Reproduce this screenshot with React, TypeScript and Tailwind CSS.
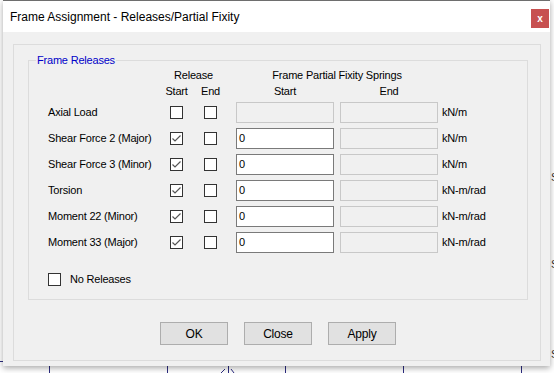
const rows = [
  { label: "Axial Load", start: false, value: null as string | null, unit: "kN/m" },
  { label: "Shear Force 2 (Major)", start: true, value: "0", unit: "kN/m" },
  { label: "Shear Force 3 (Minor)", start: true, value: "0", unit: "kN/m" },
  { label: "Torsion", start: true, value: "0", unit: "kN-m/rad" },
  { label: "Moment 22 (Minor)", start: true, value: "0", unit: "kN-m/rad" },
  { label: "Moment 33 (Major)", start: true, value: "0", unit: "kN-m/rad" },
];

function CheckBox({ checked }: { checked?: boolean }) {
  return (
    <div className="w-[13px] h-[13px] border border-[#333333] bg-white flex items-center justify-center">
      {checked && (
        <svg width="11" height="11" viewBox="0 0 11 11">
          <path d="M1.5 5.5 L4 8 L9.5 2.5" fill="none" stroke="#555555" strokeWidth="1.2" />
        </svg>
      )}
    </div>
  );
}

function TextBox({ value }: { value: string | null }) {
  if (value === null) {
    return <div className="w-[98px] h-[21px] border border-[#c8c8c8] bg-[#f0f0f0]" />;
  }
  return (
    <div className="w-[98px] h-[21px] border border-[#7a7a7a] bg-white pl-[2px] leading-[19px]">
      {value}
    </div>
  );
}

function Btn({ label }: { label: string }) {
  return (
    <div className="w-[68px] h-[23px] border border-[#adadad] bg-[#e1e1e1] flex items-center justify-center text-[12px]">
      {label}
    </div>
  );
}

export default function App() {
  return (
    <div
      className="w-[554px] h-[373px] bg-white relative overflow-hidden text-[11px] tracking-[-0.2px] text-black"
      style={{ fontFamily: '"Liberation Sans", Arial, sans-serif' }}
    >
      {/* canvas behind the dialog */}
      <svg className="absolute inset-0" width="554" height="373">
        <g stroke="#2c2c80" strokeWidth="1">
          <line x1="0" y1="361.5" x2="6" y2="361.5" />
          <line x1="49.5" y1="366" x2="49.5" y2="373" />
          <line x1="167.5" y1="366" x2="167.5" y2="373" />
          <line x1="285.5" y1="366" x2="285.5" y2="373" />
          <line x1="403.5" y1="366" x2="403.5" y2="373" />
          <line x1="521.5" y1="366" x2="521.5" y2="373" />
          <line x1="225" y1="369" x2="221" y2="373" />
          <line x1="228.5" y1="366" x2="228.5" y2="373" />
          <line x1="231" y1="369" x2="234" y2="373" />
        </g>
        <text x="551" y="181" fontSize="11" fill="#333" fontFamily="Liberation Sans">S</text>
        <text x="551" y="268" fontSize="11" fill="#333" fontFamily="Liberation Sans">S</text>
        <text x="551" y="358" fontSize="11" fill="#333" fontFamily="Liberation Sans">S</text>
      </svg>

      {/* dialog window */}
      <div className="absolute left-[3px] top-0 w-[547px] h-[366px] bg-[#f0f0f0] border-t border-[#6e6e6e] shadow-[0_2px_6px_rgba(0,0,0,0.35)] flex flex-col">
        <div className="h-[31px] bg-white flex items-center justify-between pl-[7px] pr-[1px]">
          <span className="text-[12px] tracking-normal">Frame Assignment - Releases/Partial Fixity</span>
          <div className="w-[18px] h-[19px] bg-[#c75050] text-white text-[10px] font-bold flex items-center justify-center mt-[4px]">
            x
          </div>
        </div>

        <div className="ml-[10px] mt-[12px] w-[528px] h-[317px] border border-[#dcdcdc] pt-[15px] pl-[14px] flex flex-col">
          {/* group box */}
          <div className="relative w-[500px] h-[240px] border border-[#dcdcdc] pt-[7px] pl-[19px]">
            <span className="absolute left-[7px] top-[-8px] px-[1px] bg-[#f0f0f0] text-[#0000c8] leading-[14px]">
              Frame Releases
            </span>

            <div className="flex h-[15px] leading-[15px]">
              <div className="w-[122px]" />
              <div className="w-[47px] flex justify-center">Release</div>
              <div className="w-[19px]" />
              <div className="w-[202px] flex justify-center">Frame Partial Fixity Springs</div>
            </div>
            <div className="flex h-[16px] leading-[16px]">
              <div className="w-[122px]" />
              <div className="w-[34px]">
                <div className="w-[13px] flex justify-center">Start</div>
              </div>
              <div className="w-[32px]">
                <div className="w-[13px] flex justify-center">End</div>
              </div>
              <div className="w-[98px] flex justify-center">Start</div>
              <div className="w-[6px]" />
              <div className="w-[98px] flex justify-center">End</div>
            </div>

            <div className="mt-[3px] flex flex-col gap-[5px]">
              {rows.map((r) => (
                <div key={r.label} className="flex items-center h-[21px]">
                  <div className="w-[122px]">{r.label}</div>
                  <div className="w-[34px]">
                    <CheckBox checked={r.start} />
                  </div>
                  <div className="w-[32px]">
                    <CheckBox />
                  </div>
                  <TextBox value={r.value} />
                  <div className="w-[6px]" />
                  <TextBox value={null} />
                  <div className="pl-[4px]">{r.unit}</div>
                </div>
              ))}
            </div>

            <div className="mt-[20px] flex items-center h-[13px]">
              <CheckBox />
              <span className="ml-[9px]">No Releases</span>
            </div>
          </div>

          <div className="mt-[22px] w-[500px] flex justify-center gap-[16px]">
            <Btn label="OK" />
            <Btn label="Close" />
            <Btn label="Apply" />
          </div>
        </div>
      </div>
    </div>
  );
}
